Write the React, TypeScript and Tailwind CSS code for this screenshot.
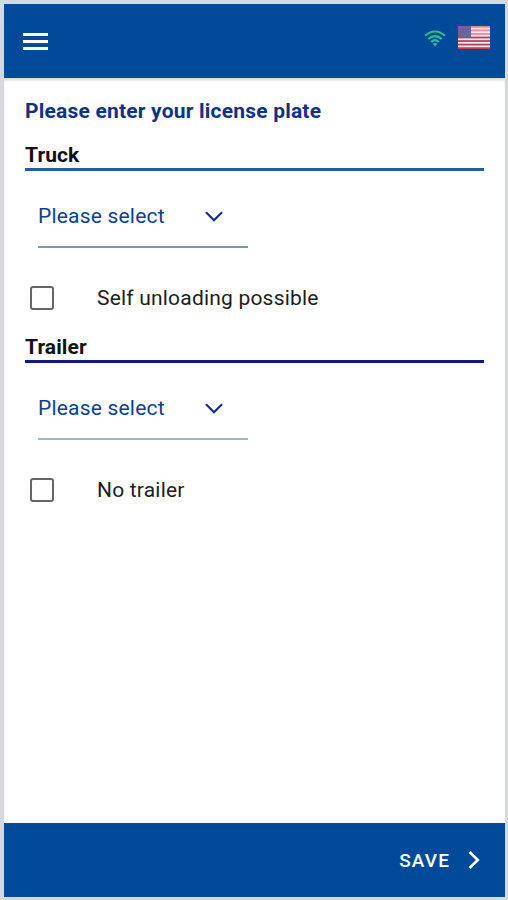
import React, { useState } from 'react';

interface PlateSectionProps {
  title: string;
  option: string;
  lineClass: string;
  selectLineClass: string;
}

const WifiIcon: React.FC = () => (
  <svg width="22" height="17" viewBox="0 0 22 17" fill="none" stroke="#2fbf86" strokeWidth="2.1">
    <path d="M1.2 5.8C6.8 0 15.2 0 20.8 5.8" />
    <path d="M4.3 9C8.2 5.2 13.8 5.2 17.7 9" />
    <path d="M7.2 12C9.5 9.7 12.5 9.7 14.8 12" />
    <path d="M8.7 13.7C10.2 12.6 11.8 12.6 13.3 13.7L11 16.4Z" fill="#2fbf86" stroke="none" />
  </svg>
);

const UsFlag: React.FC = () => (
  <svg width="32" height="23" viewBox="0 0 32 23">
    <rect width="32" height="23" fill="#fbe6ec" />
    {[0, 1, 2, 3, 4, 5, 6].map((i) => (
      <rect key={i} y={i * 3.54} width="32" height="1.77" fill={i < 3 ? '#e58a9c' : '#b8405f'} />
    ))}
    <rect width="13" height="11.5" fill="#66639a" />
    {[0, 1, 2, 3].map((row) =>
      [0, 1, 2, 3, 4].map((col) => (
        <circle key={`${row}-${col}`} cx={1.5 + col * 2.5} cy={1.6 + row * 2.7} r="0.35" fill="#918eb8" />
      ))
    )}
  </svg>
);

const PlateSection: React.FC<PlateSectionProps> = ({ title, option, lineClass, selectLineClass }) => {
  const [checked, setChecked] = useState<boolean>(false);

  return (
    <section className="h-48">
      <h2 className={`h-7 border-b-3 text-[21px] font-bold leading-[25px] tracking-[0.1px] text-[#111] ${lineClass}`}>
        {title}
      </h2>
      <button
        className={`ml-[13px] mt-[15px] flex h-[62px] w-[210px] items-center border-b-2 text-left text-[21px] tracking-[0.2px] text-[#0b3f91] ${selectLineClass}`}
      >
        <span className="w-[167px] pt-0.5">Please select</span>
        <svg width="18" height="11" viewBox="0 0 18 11" fill="none" stroke="#0a3187" strokeWidth="2.2">
          <path d="M1 1.2L9 9.2L17 1.2" />
        </svg>
      </button>
      <label className="ml-[5px] mt-[38px] flex h-6 items-center text-[21px] tracking-[0.2px] text-[#1c1c1c]">
        <input
          type="checkbox"
          checked={checked}
          onChange={() => setChecked(!checked)}
          className="mr-[43px] size-6 appearance-none rounded-[3px] border-2 border-[#666] checked:bg-[#004a99]"
        />
        <span className="pt-0.5">{option}</span>
      </label>
    </section>
  );
};

const App: React.FC = () => {
  return (
    <div className="flex h-[900px] w-[508px] flex-col border-4 border-b-3 border-r-3 border-[#d6d8dc] bg-white font-['Roboto',sans-serif]">
      <header className="flex h-[74px] shrink-0 items-center bg-[#004a99] pl-[19px] pr-[15px]">
        <button className="mr-auto flex flex-col gap-1">
          <span className="h-[3px] w-[25px] bg-white" />
          <span className="h-[3px] w-[25px] bg-white" />
          <span className="h-[3px] w-[25px] bg-white" />
        </button>
        <div className="mb-[7px] flex items-center gap-3">
          <div className="pt-0.5">
            <WifiIcon />
          </div>
          <UsFlag />
        </div>
      </header>

      <main className="flex-1 pl-[21px] pr-[21px] pt-[21px] shadow-[inset_0_3px_3px_-1px_#d5d5d5]">
        <h1 className="mb-5 h-6 text-[21px] font-bold leading-6 tracking-[0.2px] text-[#0b3289]">
          Please enter your license plate
        </h1>
        <PlateSection
          title="Truck"
          option="Self unloading possible"
          lineClass="border-[#2b5d9b]"
          selectLineClass="border-b-[#7799b3]"
        />
        <PlateSection
          title="Trailer"
          option="No trailer"
          lineClass="border-[#0e1a7d]"
          selectLineClass="border-b-[#9ab6d3]"
        />
      </main>

      <footer className="flex h-[74px] shrink-0 items-center justify-end bg-[#004a99] pr-[25px]">
        <button className="flex items-center gap-[18px] text-[19px] font-medium tracking-[1.1px] text-white">
          <span className="pt-0.5">SAVE</span>
          <svg width="12" height="18" viewBox="0 0 12 18" fill="none" stroke="white" strokeWidth="2.6">
            <path d="M1.6 1L9.8 9L1.6 17" />
          </svg>
        </button>
      </footer>
    </div>
  );
};

export default App;
